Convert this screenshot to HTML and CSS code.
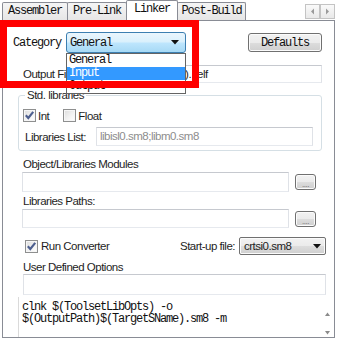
FILE: index.html
```html
<!DOCTYPE html>
<html>
<head>
<meta charset="utf-8">
<link rel="stylesheet" href="styles.css">
</head>
<body>
<div class="tabstrip">
  <div class="tab t-asm">Assembler</div>
  <div class="tab t-pre">Pre-Link</div>
  <div class="tab t-lnk active">Linker</div>
  <div class="tab t-post">Post-Build</div>
  <div class="tabscroll">
    <span class="sbtn"><svg width="5" height="7" viewBox="0 0 5 7"><path d="M4 0.5 L1 3.5 L4 6.5 Z" fill="#9a9a9a"/></svg></span>
    <span class="sbtn"><svg width="5" height="7" viewBox="0 0 5 7"><path d="M1 0.5 L4 3.5 L1 6.5 Z" fill="#9a9a9a"/></svg></span>
  </div>
</div>
<div class="panel">
  <div class="cat-row">
    <span class="mono cat-lbl">Category</span>
    <div class="combo-wrap">
      <div class="combo-blue">
        <span class="mono">General</span>
        <svg width="8" height="5" viewBox="0 0 8 5"><path d="M0 0 H8 L4 4.5 Z" fill="#111"/></svg>
      </div>
      <div class="droplist mono">
        <div class="item">General</div>
        <div class="item sel">Input</div>
        <div class="item">Output</div>
      </div>
    </div>
    <div class="btn defaults mono">Defaults</div>
  </div>
  <div class="out-row">
    <span class="lbl out-lbl">Output File</span>
    <div class="tb out-tb">$(TargetSName)<span class="dot">.</span>elf</div>
  </div>
  <div class="group">
    <span class="legend">Std. libraries</span>
    <div class="chk-row">
      <span class="chk">
        <span class="box"><svg width="11" height="11" viewBox="0 0 11 11"><path d="M1.8 5.2 L4.3 8 L9.2 1.8" stroke="#4d5f8f" stroke-width="2.1" fill="none"/></svg></span>
        <span class="lbl">Int</span>
      </span>
      <span class="chk float-chk">
        <span class="box"></span>
        <span class="lbl">Float</span>
      </span>
    </div>
    <div class="lib-row">
      <span class="lbl lib-lbl">Libraries List:</span>
      <div class="tb lib-tb">libisl0.sm8;libm0.sm8</div>
    </div>
  </div>
  <div class="lbl field-lbl obj-lbl">Object/Libraries Modules</div>
  <div class="browse-row r1">
    <div class="tb"></div>
    <div class="btn small"><span class="dots">....</span></div>
  </div>
  <div class="lbl field-lbl path-lbl">Libraries Paths:</div>
  <div class="browse-row r2">
    <div class="tb"></div>
    <div class="btn small"><span class="dots">....</span></div>
  </div>
  <div class="conv-row">
    <span class="chk">
      <span class="box"><svg width="11" height="11" viewBox="0 0 11 11"><path d="M1.8 5.2 L4.3 8 L9.2 1.8" stroke="#4d5f8f" stroke-width="2.1" fill="none"/></svg></span>
      <span class="lbl">Run Converter</span>
    </span>
    <span class="lbl start-lbl">Start-up file:</span>
    <div class="combo-grey">
      <span class="lbl">crtsi0.sm8</span>
      <svg width="8" height="5" viewBox="0 0 8 5"><path d="M0 0 H8 L4 4.5 Z" fill="#111"/></svg>
    </div>
  </div>
  <div class="lbl field-lbl user-lbl">User Defined Options</div>
  <div class="tb user-tb"></div>
  <div class="cmdline">
    <div class="cmd-text mono">clnk $(ToolsetLibOpts) -o<br>$(OutputPath)$(TargetSName).sm8 -m</div>
    <div class="vscroll">
      <svg width="5" height="4" viewBox="0 0 5 4"><path d="M0 4 L2.5 0.5 L5 4 Z" fill="#8a8a8a"/></svg>
      <svg width="5" height="4" viewBox="0 0 5 4"><path d="M0 0 L2.5 3.5 L5 0 Z" fill="#8a8a8a"/></svg>
    </div>
  </div>
</div>
<div class="highlight"></div>
</body>
</html>
```

FILE: styles.css
```css
html, body {
  margin: 0;
  padding: 0;
}
body {
  position: relative;
  width: 338px;
  height: 341px;
  overflow: hidden;
  background: #ffffff;
  font-family: "Liberation Sans", Arial, sans-serif;
  font-size: 11.5px;
  letter-spacing: -0.5px;
  color: #1e1e1e;
}
.mono {
  font-family: "Liberation Mono", "DejaVu Sans Mono", monospace;
  font-size: 12px;
  letter-spacing: -1.2px;
  color: #111;
}
.lbl {
  font-family: "Liberation Sans", Arial, sans-serif;
  font-size: 11.5px;
  letter-spacing: -0.5px;
  color: #1e1e1e;
  white-space: nowrap;
}

/* tabs */
.tabstrip {
  display: flex;
  align-items: flex-end;
  height: 20px;
  padding-left: 2px;
  position: relative;
  z-index: 2;
}
.tab {
  box-sizing: border-box;
  height: 18px;
  border: 1px solid #898c95;
  border-bottom: none;
  background: linear-gradient(#f5f5f5, #e6e6e6);
  font-family: "Liberation Mono", "DejaVu Sans Mono", monospace;
  font-size: 12px;
  letter-spacing: -1.2px;
  color: #111;
  text-align: center;
  line-height: 17px;
  border-radius: 2px 2px 0 0;
}
.t-asm { width: 66px; }
.t-pre { width: 60px; margin-left: -1px; }
.t-lnk { width: 52px; margin-left: -1px; }
.t-post { width: 69px; margin-left: -1px; }
.tab.active {
  height: 21px;
  margin-bottom: -1px;
  background: #ffffff;
  line-height: 16px;
  position: relative;
  z-index: 3;
}
.tabscroll {
  margin-left: auto;
  margin-right: 3px;
  align-self: flex-start;
  margin-top: 4px;
  display: flex;
}
.sbtn {
  box-sizing: border-box;
  width: 15px;
  height: 15px;
  border: 1px solid #c4c4c4;
  background: linear-gradient(#fafafa, #e9e9e9);
  display: flex;
  align-items: center;
  justify-content: center;
}

/* panel */
.panel {
  box-sizing: border-box;
  width: 333px;
  height: 318px;
  margin-left: 2px;
  border: 1px solid #898c95;
  background: #ffffff;
  display: flex;
  flex-direction: column;
  position: relative;
  z-index: 1;
}

.cat-row {
  display: flex;
  align-items: center;
  height: 21px;
  margin-top: 11px;
  padding-left: 10px;
  margin-right: 12px;
}
.cat-lbl {
  width: 53px;
}
.combo-wrap {
  position: relative;
  width: 120px;
  height: 21px;
}
.combo-blue {
  box-sizing: border-box;
  height: 21px;
  border: 1px solid #3c7fb1;
  border-radius: 3px;
  background: linear-gradient(#eaf6fd 0%, #d9f0fc 48%, #bee6fd 52%, #a7d9f5 100%);
  display: flex;
  align-items: center;
  justify-content: space-between;
  padding: 0 6px 0 3px;
}
.droplist {
  position: absolute;
  left: 0;
  top: 21px;
  width: 120px;
  box-sizing: border-box;
  border: 1px solid #646464;
  background: #ffffff;
  z-index: 5;
}
.item {
  height: 13px;
  line-height: 13px;
  padding-left: 2px;
}
.item.sel {
  background: #3399ff;
  color: #ffffff;
}
.btn {
  box-sizing: border-box;
  border: 1px solid #707070;
  border-radius: 3px;
  background: linear-gradient(#f2f2f2 0%, #ebebeb 50%, #dddddd 51%, #cfcfcf 100%);
  box-shadow: inset 0 0 0 1px #fbfbfb;
  display: flex;
  align-items: center;
  justify-content: center;
}
.defaults {
  margin-left: auto;
  width: 74px;
  height: 19px;
}

.out-row {
  display: flex;
  align-items: center;
  height: 18px;
  margin-top: 12px;
  padding-left: 20px;
  margin-right: 12px;
}
.out-lbl {
  width: 73px;
}
.tb {
  box-sizing: border-box;
  border: 1px solid;
  border-color: #c6c9cf #dfe2e7 #e6e9ee #dfe2e7;
  background: #ffffff;
}
.out-tb {
  flex: 1;
  height: 18px;
  line-height: 16px;
  padding-left: 14px;
  white-space: nowrap;
  overflow: hidden;
}
.dot {
  margin-right: 6px;
}

.group {
  position: relative;
  box-sizing: border-box;
  height: 56px;
  margin-top: 12px;
  margin-left: 15px;
  margin-right: 12px;
  border: 1px solid #d5dfe5;
  border-radius: 3px;
  padding-left: 4px;
  padding-right: 8px;
}
.legend {
  position: absolute;
  left: 6px;
  top: -8px;
  padding: 0 2px;
  background: #ffffff;
  line-height: 14px;
  white-space: nowrap;
}
.chk-row {
  display: flex;
  align-items: center;
  height: 13px;
  margin-top: 13px;
}
.chk {
  display: flex;
  align-items: center;
}
.box {
  box-sizing: border-box;
  width: 13px;
  height: 13px;
  border: 1px solid #8e8f8f;
  background: linear-gradient(135deg, #dcdcdc 0%, #f4f4f4 60%, #ffffff 100%);
  box-shadow: inset 0 0 0 1px #f6f6f6;
  display: flex;
  align-items: center;
  justify-content: center;
  margin-right: 2px;
}
.float-chk {
  margin-left: 14px;
}
.lib-row {
  display: flex;
  align-items: center;
  height: 19px;
  margin-top: 5px;
  padding-left: 2px;
}
.lib-lbl {
  width: 71px;
}
.lib-tb {
  flex: 1;
  height: 19px;
  line-height: 17px;
  padding-left: 3px;
  color: #8d8d8d;
  white-space: nowrap;
}

.field-lbl {
  line-height: 12px;
  height: 12px;
  padding-left: 20px;
}
.obj-lbl { margin-top: 7px; }
.path-lbl { margin-top: 3px; }
.user-lbl { margin-top: 6px; }

.browse-row {
  display: flex;
  align-items: center;
  margin-top: 2px;
  margin-left: 19px;
}
.browse-row .tb {
  width: 267px;
  height: 100%;
}
.r1 { height: 20px; }
.r2 { height: 19px; }
.small {
  width: 21px;
  height: 16px;
  margin-left: 6px;
  align-items: flex-end;
}
.dots {
  font-size: 8px;
  line-height: 8px;
  color: #6a6a6a;
  letter-spacing: -0.5px;
}

.conv-row {
  display: flex;
  align-items: center;
  height: 18px;
  margin-top: 9px;
  margin-left: 22px;
  margin-right: 8px;
}
.conv-row .box {
  margin-right: 3px;
}
.start-lbl {
  margin-left: auto;
  margin-right: 4px;
}
.combo-grey {
  box-sizing: border-box;
  width: 87px;
  height: 18px;
  border: 1px solid #707070;
  border-radius: 2px;
  background: linear-gradient(#f2f2f2 0%, #ebebeb 50%, #dddddd 51%, #cfcfcf 100%);
  box-shadow: inset 0 0 0 1px #fbfbfb;
  display: flex;
  align-items: center;
  justify-content: space-between;
  padding: 0 4px 0 4px;
}

.user-tb {
  height: 21px;
  margin-top: 1px;
  margin-left: 20px;
  margin-right: 8px;
}

.cmdline {
  flex: 1;
  margin-top: 2px;
  margin-left: 15px;
  border-left: 1px solid #dadada;
  display: flex;
}
.cmd-text {
  flex: 1;
  padding-top: 4px;
  padding-left: 3px;
  line-height: 12px;
  white-space: nowrap;
}
.vscroll {
  width: 14px;
  display: flex;
  flex-direction: column;
  align-items: center;
  padding-top: 15px;
  gap: 15px;
}

.highlight {
  position: absolute;
  left: 0;
  top: 20px;
  width: 199px;
  height: 68px;
  box-sizing: border-box;
  border: 7px solid #ff0000;
  z-index: 10;
}
```
